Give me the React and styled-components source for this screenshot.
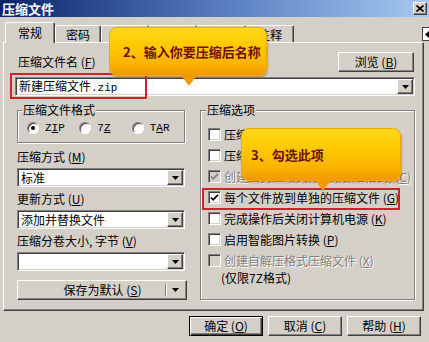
import React from "react";
import styled, { createGlobalStyle, css } from "styled-components";

const GlobalStyle = createGlobalStyle`
  html, body {
    margin: 0;
    padding: 0;
    background: #d4d0c8;
  }
  body {
    font: 12px/16px "Noto Sans CJK SC", "Liberation Sans", sans-serif;
    color: #000;
  }
`;

/* classic 3d borders */
const raised = css`
  border: 1px solid;
  border-color: #fff #404040 #404040 #fff;
  box-shadow: inset -1px -1px 0 #808080;
`;

const sunken = css`
  border: 1px solid;
  border-color: #808080 #fff #fff #808080;
  box-shadow: inset 1px 1px 0 #404040, inset -1px -1px 0 #d4d0c8;
`;

const etched = css`
  border: 1px solid #808080;
  box-shadow: inset 1px 1px 0 #fff, 1px 1px 0 #fff;
`;

const Window = styled.div`
  position: relative;
  width: 429px;
  height: 342px;
  overflow: hidden;
  background: #d4d0c8;
  display: flex;
  flex-direction: column;
`;

const TitleBar = styled.div`
  height: 17px;
  flex-shrink: 0;
  display: flex;
  align-items: center;
  justify-content: space-between;
  padding: 0 2px;
  background: linear-gradient(to right, #0a246a, #5d82c4 55%, #a6caf0);
`;

const TitleText = styled.span`
  color: #fff;
  font-weight: 700;
  font-size: 13px;
  line-height: 17px;
`;

const CloseButton = styled.div`
  box-sizing: border-box;
  width: 14px;
  height: 13px;
  background: #d4d0c8;
  ${raised};
  display: flex;
  align-items: center;
  justify-content: center;
`;

const TabStrip = styled.div`
  height: 25px;
  flex-shrink: 0;
  display: flex;
  align-items: flex-end;
  padding-left: 5px;
`;

const Tab = styled.div`
  position: relative;
  z-index: ${(p) => (p.$active ? 2 : 0)};
  box-sizing: border-box;
  width: ${(p) => p.$width}px;
  height: ${(p) => (p.$active ? 21 : 17)}px;
  margin-bottom: ${(p) => (p.$active ? -1 : 0)}px;
  padding-top: ${(p) => (p.$active ? 2 : 1)}px;
  background: #d4d0c8;
  border-top: 1px solid #fff;
  border-left: 1px solid #fff;
  border-right: 1px solid #404040;
  border-radius: 2px 2px 0 0;
  box-shadow: inset -1px 0 0 #808080;
  text-align: center;
`;

const TabScroll = styled.div`
  flex-shrink: 0;
  align-self: flex-start;
  box-sizing: border-box;
  width: 16px;
  height: 14px;
  margin: 10px -9px 0 auto;
  background: #fff;
  border: 1px solid #404040;
  display: flex;
  align-items: center;
  padding-left: 2px;
`;

const Panel = styled.div`
  box-sizing: border-box;
  width: 421px;
  height: 269px;
  margin-left: 3px;
  flex-shrink: 0;
  border-top: 1px solid #fff;
  border-left: 1px solid #fff;
  border-right: 1px solid #404040;
  border-bottom: 1px solid #404040;
  box-shadow: inset -1px -1px 0 #808080;
  padding: 9px 8px 0 11px;
`;

const NameRow = styled.div`
  height: 20px;
  display: flex;
  align-items: center;
  justify-content: space-between;
`;

const Label = styled.span`
  padding-left: ${(p) => p.$indent || 0}px;
  color: ${(p) => (p.$disabled ? "#808080" : "#000")};
  text-shadow: ${(p) => (p.$disabled ? "1px 1px 0 #fff" : "none")};
  white-space: nowrap;
`;

const Key = styled.u`
  text-underline-offset: 1px;
`;

const Button = styled.button`
  box-sizing: border-box;
  width: ${(p) => p.$width || 74}px;
  height: 20px;
  margin: 0;
  padding: 0;
  background: #d4d0c8;
  font: inherit;
  color: #000;
  ${(p) =>
    p.$default
      ? css`
          border: 1px solid #000;
          box-shadow: inset 1px 1px 0 #fff, inset -1px -1px 0 #404040,
            inset -2px -2px 0 #808080;
        `
      : raised};
`;

const BrowseButton = styled(Button)`
  margin-right: 1px;
`;

const Combo = styled.div`
  box-sizing: border-box;
  height: 19px;
  margin-top: ${(p) => p.$top || 0}px;
  margin-right: ${(p) => p.$right || 0}px;
  background: #fff;
  ${sunken};
  display: flex;
  align-items: center;
  padding: 1px;
`;

const ComboText = styled.div`
  flex: 1;
  padding-left: 2px;
  line-height: 15px;
  white-space: nowrap;
  overflow: hidden;
`;

const Mono = styled.span`
  font-family: "Liberation Mono", "Noto Sans CJK SC", monospace;
  font-size: 11px;
`;

const DropButton = styled.div`
  box-sizing: border-box;
  width: 16px;
  height: 15px;
  background: #d4d0c8;
  ${raised};
  display: flex;
  align-items: center;
  justify-content: center;
`;

const Columns = styled.div`
  display: grid;
  grid-template-columns: 170px 215px;
  column-gap: 13px;
  margin-top: 14px;
  padding-left: 2px;
`;

const Column = styled.div`
  display: flex;
  flex-direction: column;
`;

const Group = styled.div`
  position: relative;
  box-sizing: border-box;
  height: ${(p) => p.$height}px;
  margin-right: ${(p) => p.$right || 0}px;
  ${etched};
  padding: ${(p) => p.$pad};
`;

const Legend = styled.span`
  position: absolute;
  top: -9px;
  left: ${(p) => p.$left}px;
  padding: 0 1px;
  background: #d4d0c8;
  line-height: 16px;
`;

const RadioRow = styled.div`
  display: flex;
  height: 16px;
`;

const RadioItem = styled.label`
  width: 54px;
  display: flex;
  align-items: center;
  gap: 6px;
`;

const RadioDot = styled.span`
  position: relative;
  box-sizing: border-box;
  width: 12px;
  height: 12px;
  border-radius: 50%;
  background: #fff;
  border: 1px solid;
  border-color: #808080 #fff #fff #808080;
  box-shadow: inset 1px 1px 0 #404040;
  &::after {
    content: "";
    display: ${(p) => (p.$checked ? "block" : "none")};
    position: absolute;
    left: 3px;
    top: 3px;
    width: 4px;
    height: 4px;
    border-radius: 50%;
    background: #000;
  }
`;

const FieldLabel = styled.div`
  height: 16px;
  margin-top: ${(p) => p.$top}px;
  white-space: nowrap;
`;

const SplitButton = styled.div`
  box-sizing: border-box;
  height: 20px;
  margin-top: 9px;
  background: #d4d0c8;
  ${raised};
  display: flex;
  align-items: center;
`;

const SplitText = styled.span`
  flex: 1;
  text-align: center;
  padding-left: 22px;
`;

const SplitDivider = styled.span`
  width: 1px;
  height: 12px;
  background: #808080;
  box-shadow: 1px 0 0 #fff;
  margin-right: 6px;
`;

const SplitArrow = styled.span`
  width: 14px;
  display: flex;
`;

const CheckRow = styled.div`
  height: 21px;
  display: flex;
  align-items: center;
  gap: 3px;
`;

const CheckBox = styled.span`
  flex-shrink: 0;
  box-sizing: border-box;
  width: 13px;
  height: 13px;
  background: ${(p) => (p.$disabled ? "#d4d0c8" : "#fff")};
  ${sunken};
  display: flex;
  align-items: center;
  justify-content: center;
`;

const NoteLine = styled.div`
  padding-left: 13px;
  margin-top: -1px;
  line-height: 16px;
`;

const ButtonRow = styled.div`
  display: flex;
  justify-content: flex-end;
  gap: 5px;
  margin-top: 5px;
  padding-right: 8px;
`;

/* overlays: annotation marks drawn over the dialog */
const Highlight = styled.div`
  position: absolute;
  box-sizing: border-box;
  left: ${(p) => p.$x}px;
  top: ${(p) => p.$y}px;
  width: ${(p) => p.$w}px;
  height: ${(p) => p.$h}px;
  border: 2px solid #d2202c;
  pointer-events: none;
`;

const Callout = styled.div`
  position: absolute;
  z-index: 5;
  box-sizing: border-box;
  left: ${(p) => p.$x}px;
  top: ${(p) => p.$y}px;
  width: ${(p) => p.$w}px;
  height: ${(p) => p.$h}px;
  padding-left: ${(p) => p.$pad}px;
  border-radius: 8px;
  border: 1px solid #eea800;
  background: linear-gradient(
    180deg,
    #ffd81a 0%,
    #ffc800 40%,
    #f9b000 80%,
    #f09800 100%
  );
  box-shadow: 1px 2px 2px rgba(170, 90, 0, 0.45);
  display: flex;
  align-items: center;
  white-space: nowrap;
  &::after {
    content: "";
    position: absolute;
    top: 100%;
    left: ${(p) => p.$tip - 8}px;
    border-left: 8px solid transparent;
    border-right: 8px solid transparent;
    border-top: 11px solid #f09c00;
  }
`;

const CalloutText = styled.span`
  color: #6e1000;
  -webkit-text-fill-color: #6e1000;
  font-weight: 700;
  font-size: 13px;
  line-height: 16px;
`;

const tabs = [
  { label: "常规", width: 50, active: true },
  { label: "密码", width: 46 },
  { label: "文件", width: 48 },
  { label: "备份", width: 48 },
  { label: "时间", width: 49 },
  { label: "注释", width: 48 },
];

const options = [
  { text: "压缩后删除源文件", k: "D" },
  { text: "压缩后测试压缩文件", k: "T" },
  { text: "创建固实压缩文件 (仅限7Z格式)", k: "C", checked: true, disabled: true },
  { text: "每个文件放到单独的压缩文件", k: "G", checked: true },
  { text: "完成操作后关闭计算机电源", k: "K" },
  { text: "启用智能图片转换", k: "P" },
  { text: "创建自解压格式压缩文件", k: "X", disabled: true },
];

const Mn = ({ text, k }) => (
  <>
    {text} (<Key>{k}</Key>)
  </>
);

const DownArrow = () => (
  <svg width="7" height="4" viewBox="0 0 7 4">
    <path d="M0 0h7L3.5 4z" fill="#000" />
  </svg>
);

const Tick = ({ color }) => (
  <svg width="9" height="9" viewBox="0 0 9 9">
    <path d="M1 4.5l2.2 2.3L8 1.8" fill="none" stroke={color} strokeWidth="1.8" />
  </svg>
);

const ComboBox = ({ children, top, right }) => (
  <Combo $top={top} $right={right}>
    <ComboText>{children}</ComboText>
    <DropButton>
      <DownArrow />
    </DropButton>
  </Combo>
);

export default function App() {
  return (
    <>
      <GlobalStyle />
      <Window>
        <TitleBar>
          <TitleText>压缩文件</TitleText>
          <CloseButton>
            <svg width="8" height="7" viewBox="0 0 8 7">
              <path d="M0.5 0.5l7 6M7.5 0.5l-7 6" stroke="#000" strokeWidth="1.6" />
            </svg>
          </CloseButton>
        </TitleBar>

        <TabStrip>
          {tabs.map((t) => (
            <Tab key={t.label} $width={t.width} $active={t.active}>
              {t.label}
            </Tab>
          ))}
          <TabScroll>
            <svg width="4" height="7" viewBox="0 0 4 7">
              <path d="M4 0v7L0 3.5z" fill="#000" />
            </svg>
          </TabScroll>
        </TabStrip>

        <Panel>
          <NameRow>
            <Label $indent={3}>
              <Mn text="压缩文件名" k="F" />
            </Label>
            <BrowseButton $width={76}>
              <Mn text="浏览" k="B" />
            </BrowseButton>
          </NameRow>
          <ComboBox top={5}>
            新建压缩文件<Mono>.zip</Mono>
          </ComboBox>

          <Columns>
            <Column>
              <Group $height={33} $right={2} $pad="9px 0 0 9px">
                <Legend $left={4}>压缩文件格式</Legend>
                <RadioRow>
                  {["ZIP", "7Z", "TAR"].map((f, i) => (
                    <RadioItem key={f}>
                      <RadioDot $checked={i === 0} />
                      <Mono>
                        {f[0]}
                        <Key>{f[1]}</Key>
                        {f.slice(2)}
                      </Mono>
                    </RadioItem>
                  ))}
                </RadioRow>
              </Group>

              <FieldLabel $top={6}>
                <Mn text="压缩方式" k="M" />
              </FieldLabel>
              <ComboBox top={3} right={2}>
                标准
              </ComboBox>

              <FieldLabel $top={4}>
                <Mn text="更新方式" k="U" />
              </FieldLabel>
              <ComboBox top={3} right={2}>
                添加并替换文件
              </ComboBox>

              <FieldLabel $top={4}>
                <Mn text="压缩分卷大小, 字节" k="V" />
              </FieldLabel>
              <ComboBox top={3} right={2} />

              <SplitButton>
                <SplitText>
                  <Mn text="保存为默认" k="S" />
                </SplitText>
                <SplitDivider />
                <SplitArrow>
                  <DownArrow />
                </SplitArrow>
              </SplitButton>
            </Column>

            <Group $height={190} $pad="13px 0 0 7px">
              <Legend $left={5}>压缩选项</Legend>
              {options.map((o) => (
                <CheckRow key={o.k}>
                  <CheckBox $disabled={o.disabled}>
                    {o.checked && <Tick color={o.disabled ? "#808080" : "#000"} />}
                  </CheckBox>
                  <Label $disabled={o.disabled}>
                    <Mn text={o.text} k={o.k} />
                  </Label>
                </CheckRow>
              ))}
              <NoteLine>(仅限7Z格式)</NoteLine>
            </Group>
          </Columns>
        </Panel>

        <ButtonRow>
          <Button $default>
            <Mn text="确定" k="O" />
          </Button>
          <Button>
            <Mn text="取消" k="C" />
          </Button>
          <Button>
            <Mn text="帮助" k="H" />
          </Button>
        </ButtonRow>

        <Highlight $x={10} $y={73} $w={137} $h={26} />
        <Highlight $x={202} $y={188} $w={198} $h={22} />

        <Callout $x={109} $y={27} $w={158} $h={49} $pad={13} $tip={79}>
          <CalloutText>2、输入你要压缩后名称</CalloutText>
        </Callout>
        <Callout $x={241} $y={128} $w={160} $h={53} $pad={9} $tip={81}>
          <CalloutText>3、勾选此项</CalloutText>
        </Callout>
      </Window>
    </>
  );
}
